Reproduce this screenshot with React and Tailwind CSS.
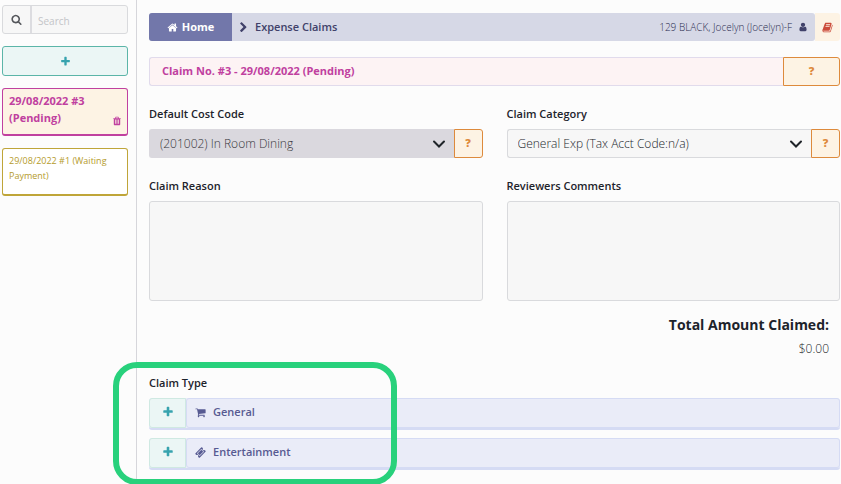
import React from 'react';

const ICONS = {
  plus: 'M1600 736v192q0 40-28 68t-68 28h-416v416q0 40-28 68t-68 28h-192q-40 0-68-28t-28-68v-416h-416q-40 0-68-28t-28-68v-192q0-40 28-68t68-28h416v-416q0-40 28-68t68-28h192q40 0 68 28t28 68v416h416q40 0 68 28t28 68z',
  search: 'M1216 832q0-185-131.5-316.5t-316.5-131.5-316.5 131.5-131.5 316.5 131.5 316.5 316.5 131.5 316.5-131.5 131.5-316.5zm512 832q0 52-38 90t-90 38q-54 0-90-38l-343-342q-179 124-399 124-143 0-273.5-55.5t-225-150-150-225-55.5-273.5 55.5-273.5 150-225 225-150 273.5-55.5 273.5 55.5 225 150 150 225 55.5 273.5q0 220-124 399l343 343q37 37 37 90z',
  home: 'M1472 992v480q0 26-19 45t-45 19h-384v-384h-256v384h-384q-26 0-45-19t-19-45v-480q0-1 .5-3t.5-3l575-474 575 474q1 2 1 6zm223-69l-62 74q-8 9-21 11h-3q-13 0-21-7l-692-577-692 577q-12 8-24 7-13-2-21-11l-62-74q-8-10-7-23.5t11-21.5l719-599q32-26 76-26t76 26l244 204v-195q0-14 9-23t23-9h192q14 0 23 9t9 23v408l219 182q10 8 11 21.5t-7 23.5z',
  user: 'M1536 1399q0 109-62.5 187t-150.5 78h-854q-88 0-150.5-78t-62.5-187q0-85 8.5-160.5t31.5-152 58.5-131 94-89 134.5-34.5q131 128 313 128t313-128q76 0 134.5 34.5t94 89 58.5 131 31.5 152 8.5 160.5zm-256-887q0 159-112.5 271.5t-271.5 112.5-271.5-112.5-112.5-271.5 112.5-271.5 271.5-112.5 271.5 112.5 112.5 271.5z',
  cart: 'M704 1536q0 52-38 90t-90 38-90-38-38-90 38-90 90-38 90 38 38 90zm896 0q0 52-38 90t-90 38-90-38-38-90 38-90 90-38 90 38 38 90zm128-1088v512q0 24-16.5 42.5t-40.5 21.5l-1044 122q13 60 13 70 0 16-24 64h920q26 0 45 19t19 45-19 45-45 19h-1024q-26 0-45-19t-19-45q0-11 8-31.5t16-36 21.5-40 15.5-29.5l-177-823h-204q-26 0-45-19t-19-45 19-45 45-19h256q16 0 28.5 6.5t19.5 15.5 13 24.5 8 26 5.5 29.5 4.5 26h1201q26 0 45 19t19 45z',
  chevron: 'M1363 877l-742 742q-19 19-45 19t-45-19l-166-166q-19-19-19-45t19-45l531-531-531-531q-19-19-19-45t19-45l166-166q19-19 45-19t45 19l742 742q19 19 19 45t-19 45z',
  ticket: 'M1024 452l316 316-572 572-316-316zm-211 979l618-618q19-19 19-45t-19-45l-362-362q-18-18-45-18t-45 18l-618 618q-19 19-19 45t19 45l362 362q18 18 45 18t45-18zm889-637l-907 908q-37 37-90.5 37t-90.5-37l-126-125q56-56 56-136t-56-136-136-56-136 56l-125-126q-37-37-37-90.5t37-90.5l907-906q37-37 90.5-37t90.5 37l125 125q-56 56-56 136t56 136 136 56 136-56l126 125q37 37 37 90.5t-37 90.5z',
  book: 'M1703 478q40 57 18 129l-275 906q-19 64-76.5 107.5t-122.5 43.5h-923q-77 0-148.5-53.5t-99.5-131.5q-24-67-2-127 0-4 3-27t4-37q1-8-3-21.5t-3-19.5q2-11 8-21t16.5-23.5 16.5-23.5q23-38 45-91.5t30-91.5q3-10 .5-30t-.5-28q3-11 17-28t17-23q21-36 42-92t25-90q1-9-2.5-32t.5-28q4-13 22-30.5t22-22.5q19-26 42.5-84.5t27.5-96.5q1-8-3-25.5t-2-26.5q2-8 9-18t18-23 17-21q8-12 16.5-30.5t15-35 16-36 19.5-32 26.5-23.5 36-11.5 47.5 5.5l-1 3q38-9 51-9h761q74 0 114 56t18 130l-274 906q-36 119-71.5 153.5t-128.5 34.5h-869q-27 0-38 15-11 16-1 43 24 70 144 70h923q29 0 56-15.5t35-41.5l300-987q7-22 5-57 38 15 59 43zm-1064 2q-4 13 2 22.5t20 9.5h608q13 0 25.5-9.5t16.5-22.5l21-64q4-13-2-22.5t-20-9.5h-608q-13 0-25.5 9.5t-16.5 22.5zm-83 256q-4 13 2 22.5t20 9.5h608q13 0 25.5-9.5t16.5-22.5l21-64q4-13-2-22.5t-20-9.5h-608q-13 0-25.5 9.5t-16.5 22.5z',
  trash: 'M704 1376v-704q0-14-9-23t-23-9h-64q-14 0-23 9t-9 23v704q0 14 9 23t23 9h64q14 0 23-9t9-23zm256 0v-704q0-14-9-23t-23-9h-64q-14 0-23 9t-9 23v704q0 14 9 23t23 9h64q14 0 23-9t9-23zm256 0v-704q0-14-9-23t-23-9h-64q-14 0-23 9t-9 23v704q0 14 9 23t23 9h64q14 0 23-9t9-23zm-544-992h448l-48-117q-7-9-17-11h-317q-10 2-17 11zm928 32v64q0 14-9 23t-23 9h-96v948q0 83-47 143.5t-113 60.5h-832q-66 0-113-58.5t-47-141.5v-952h-96q-14 0-23-9t-9-23v-64q0-14 9-23t23-9h309l70-167q15-37 54-63t79-26h320q40 0 79 26t54 63l70 167h309q14 0 23 9t9 23z',
};

function Icon({ name, className }) {
  return (
    <svg viewBox="0 0 1792 1792" fill="currentColor" aria-hidden="true" className={`shrink-0 ${className}`}>
      <path d={ICONS[name]} />
    </svg>
  );
}

function HelpButton({ label, className }) {
  return (
    <button
      type="button"
      aria-label={label}
      className={`shrink-0 rounded-r-[3px] border border-[#dd8a3c] bg-[#fdf3e4] text-[11px] font-extrabold text-[#dd8a3c] ${className}`}
    >
      ?
    </button>
  );
}

function SelectField({ id, label, value, muted }) {
  return (
    <div className="flex flex-col gap-[7px]">
      <label htmlFor={id} className="text-[11px] leading-4 font-semibold text-[#1d232b]">{label}</label>
      <div className="flex h-[29px]">
        <div className="relative flex-1">
          <select
            id={id}
            className={`h-full w-full appearance-none rounded-l-[3px] border border-r-0 pl-[10px] text-[12px] font-light ${
              muted ? 'border-[#dad8de] bg-[#dad8de] text-[#37373c]' : 'border-[#d9dadd] bg-[#f7f7f7] text-[#22262b]'
            }`}
          >
            <option>{value}</option>
          </select>
          <svg viewBox="0 0 14 14" fill="none" stroke="#1f2429" strokeWidth="2" strokeLinecap="round" aria-hidden="true" className="pointer-events-none absolute top-2 right-2 size-[14px]">
            <path d="M2 4.5L7 9.5L12 4.5" />
          </svg>
        </div>
        <HelpButton label={`Help: ${label}`} className="w-[29px]" />
      </div>
    </div>
  );
}

function TextField({ id, label }) {
  return (
    <div className="flex flex-col gap-[7px]">
      <label htmlFor={id} className="text-[11px] leading-4 font-semibold text-[#1d232b]">{label}</label>
      <textarea id={id} className="block h-[100px] w-full resize-none rounded-[3px] border border-[#d9dadd] bg-[#f7f7f7] p-2 text-[12px]" />
    </div>
  );
}

function ClaimTypeRow({ icon, label }) {
  return (
    <div className="flex h-8 rounded-[3px] border-b-2 border-[#d5dbf4] bg-[#eaecf8]">
      <button
        type="button"
        aria-label={`Add ${label}`}
        className="flex w-[37px] items-center justify-center rounded-l-[3px] border border-[#cfe9e2] bg-[#ebf6f5] pb-[2px] text-[#37a3ae]"
      >
        <Icon name="plus" className="size-3" />
      </button>
      <button
        type="button"
        className="flex flex-1 items-center gap-[7px] rounded-[3px] border border-[#d5dbf4] pb-[2px] pl-2 text-[11px] font-semibold text-[#575a92]"
      >
        <Icon name={icon} className="size-[11px]" />
        {label}
      </button>
    </div>
  );
}

function Sidebar() {
  return (
    <aside className="flex w-[137px] shrink-0 flex-col gap-3 border-r border-[#d6d6db] pt-[5px] pr-2 pl-[2px]">
      <div className="flex h-[29px] overflow-hidden rounded-[3px] border border-[#d9dadd] bg-[#f7f7f7]">
        <button type="button" aria-label="Search" className="flex w-[27px] shrink-0 items-center justify-center text-[#55575c]">
          <Icon name="search" className="size-[11px]" />
        </button>
        <input
          type="text"
          aria-label="Search claims"
          placeholder="Search"
          className="min-w-0 flex-1 border-l-2 border-[#dcdce0] pt-1 pl-[6px] text-[10px] outline-none placeholder:text-[#c3c4c7]"
        />
      </div>
      <button
        type="button"
        aria-label="New claim"
        className="flex h-[30px] items-center justify-center rounded-[3px] border border-[#5bb5a8] bg-[#ebf6f5] text-[#37a3ae]"
      >
        <Icon name="plus" className="size-[11px]" />
      </button>
      <div className="flex h-12 items-end justify-between rounded-[3px] border border-b-2 border-[#c0409f] bg-[#fdf3e4] pr-[5px] pl-[6px] text-[#c0409f]">
        <a href="#claim-3" className="self-start pt-[3px] text-[11px] leading-[17px] font-bold">
          29/08/2022 #3<br />(Pending)
        </a>
        <button type="button" aria-label="Delete claim" className="mb-2">
          <Icon name="trash" className="size-[10px]" />
        </button>
      </div>
      <a
        href="#claim-1"
        className="block h-12 rounded-[3px] border border-b-2 border-[#bfa539] bg-white pt-1 pl-[6px] text-[9px] leading-[15px] text-[#b59b2b]"
      >
        29/08/2022 #1 (Waiting Payment)
      </a>
    </aside>
  );
}

export default function App() {
  return (
    <div className="relative flex min-h-screen overflow-hidden bg-[#fcfcfc] font-['Open_Sans','Noto_Sans',sans-serif]">
      <Sidebar />

      <main className="min-w-0 flex-1 pt-[13px] pr-px pl-3">
        <header className="flex h-7">
          <nav className="flex flex-1 items-center rounded-[3px] bg-[#d6d8e6] text-[11px] font-semibold text-[#40416a]">
            <a href="#home" className="flex h-full w-[83px] items-center justify-center gap-1 rounded-l-[3px] bg-[#7277aa] font-bold text-white">
              <Icon name="home" className="size-[11px]" />
              Home
            </a>
            <Icon name="chevron" className="mx-[6px] size-[11px]" />
            <span>Expense Claims</span>
            <span className="ml-auto text-[10px] font-light text-[#2b2c50]">129 BLACK, Jocelyn (Jocelyn)-F</span>
            <Icon name="user" className="mr-[7px] ml-[6px] size-[10px]" />
          </nav>
          <button type="button" aria-label="Manual" className="flex w-[25px] items-center justify-center rounded-r-[3px] bg-[#fdf3e4] text-[#cb4b3a]">
            <Icon name="book" className="size-[11px]" />
          </button>
        </header>

        <div className="mt-4 flex h-[29px]">
          <h1 className="flex flex-1 items-center rounded-l-[3px] border border-r-0 border-[#e1dbec] bg-[#fdf3f4] pl-3 text-[11px] font-bold text-[#c0409f]">
            Claim No. #3 - 29/08/2022 (Pending)
          </h1>
          <HelpButton label="Help: claim" className="w-[57px]" />
        </div>

        <form className="mt-5 grid grid-cols-2 gap-x-6 gap-y-5">
          <SelectField id="cost-code" label="Default Cost Code" value="(201002) In Room Dining" muted />
          <SelectField id="category" label="Claim Category" value="General Exp (Tax Acct Code:n/a)" />
          <TextField id="reason" label="Claim Reason" />
          <TextField id="comments" label="Reviewers Comments" />
        </form>

        <div className="mt-3 pr-[11px] text-right">
          <p className="text-[14px] leading-6 font-bold text-[#1d232b]">Total Amount Claimed:</p>
          <p className="text-[12px] leading-6 font-light text-[#22262b]">$0.00</p>
        </div>

        <section className="relative mt-[14px] flex flex-col gap-2">
          <h2 className="-mb-px text-[11px] leading-4 font-semibold text-[#1d232b]">Claim Type</h2>
          <ClaimTypeRow icon="cart" label="General" />
          <ClaimTypeRow icon="ticket" label="Entertainment" />
          {/* Highlight ring around the claim types */}
          <div className="pointer-events-none absolute -top-[13px] -left-9 h-[123px] w-[284px] rounded-3xl border-6 border-[#28d17c]" />
        </section>
      </main>
    </div>
  );
}
